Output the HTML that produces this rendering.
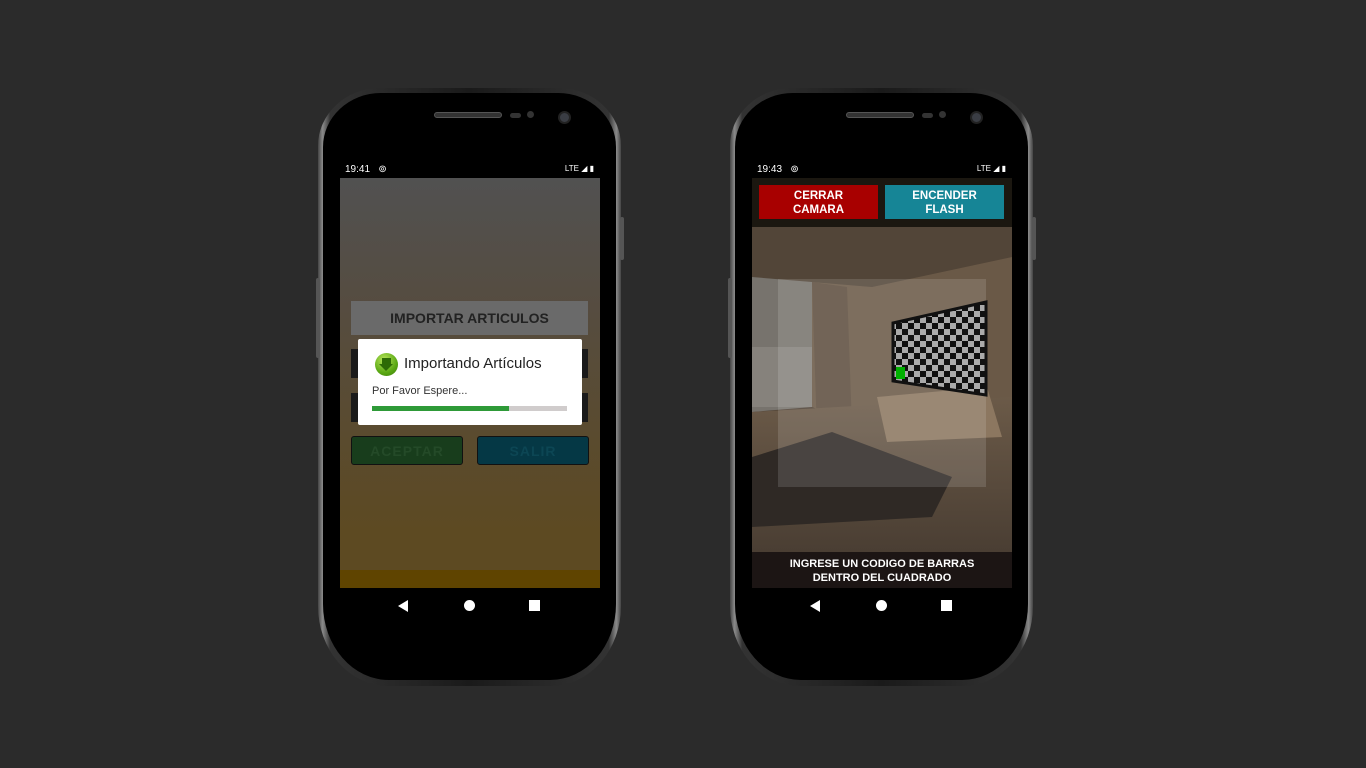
<!DOCTYPE html>
<html><head><meta charset="utf-8"><style>
*{margin:0;padding:0;box-sizing:border-box}
body{width:1366px;height:768px;background:#2b2b2b;position:relative;overflow:hidden;font-family:"Liberation Sans",sans-serif}
.phone{position:absolute;top:88px;width:303px;height:598px;border-radius:62px 62px 70px 70px/58px 58px 80px 80px;background:linear-gradient(90deg,#444,#8a8a8a 1.5%,#333 4%,#1a1a1a 50%,#333 96%,#8a8a8a 98.5%,#444)}
.inner{position:absolute;left:5px;top:5px;right:5px;bottom:6px;background:#000;border-radius:58px 58px 66px 66px/54px 54px 76px 76px}
.spk{position:absolute;left:116px;top:24px;width:68px;height:6px;border-radius:3px;background:#333;border:1px solid #555}
.d1{position:absolute;left:192px;top:25px;width:11px;height:5px;border-radius:3px;background:#333}
.d2{position:absolute;left:209px;top:23px;width:7px;height:7px;border-radius:50%;background:#333}
.cam{position:absolute;left:240px;top:23px;width:13px;height:13px;border-radius:50%;background:#3a3d44;border:2px solid #222}
.btn{position:absolute;width:4px;background:#555;border-radius:2px}
.screen{position:absolute;left:22px;top:72px;width:260px;height:462px;background:#000;overflow:hidden}
.sb{position:absolute;left:0;top:0;width:260px;height:18px;color:#fff;font-size:10px}
.sb .t{position:absolute;left:5px;top:4px}
.sb .r{position:absolute;right:6px;top:4px;font-size:8px}
.nav{position:absolute;top:428px;width:260px;height:34px}
.tri{position:absolute;left:58px;top:12px;width:0;height:0;border-top:6px solid transparent;border-bottom:6px solid transparent;border-right:10px solid #fff}
.cir{position:absolute;left:124px;top:12px;width:11px;height:11px;border-radius:50%;background:#fff}
.sq{position:absolute;left:189px;top:12px;width:11px;height:11px;background:#fff}
.c{position:absolute;text-align:center}
</style></head><body>

<!-- LEFT PHONE -->
<div class="phone" style="left:318px">
<div class="btn" style="left:302px;top:129px;height:43px"></div>
<div class="btn" style="left:-2px;top:190px;height:80px"></div>
<div class="inner"></div>
<div class="spk"></div><div class="d1"></div><div class="d2"></div><div class="cam"></div>
<div class="screen">
 <div class="sb"><span class="t">19:41 &nbsp; ⊚</span><span class="r">LTE ◢ ▮</span></div>
 <div style="position:absolute;top:18px;left:0;width:260px;height:392px;background:linear-gradient(#515151,#564c3f 35%,#5d4a22 90%)"></div>
 <div style="position:absolute;top:410px;left:0;width:260px;height:18px;background:#5f4400"></div>
 <div class="c" style="left:11px;top:141px;width:237px;height:34px;background:#6a6a6a;color:#222;font-weight:bold;font-size:14px;line-height:34px">IMPORTAR ARTICULOS</div>
 <div style="position:absolute;left:11px;top:189px;width:237px;height:29px;background:#1a1a1a"></div>
 <div style="position:absolute;left:11px;top:233px;width:237px;height:29px;background:#1a1a1a"></div>
 <div class="c" style="left:11px;top:276px;width:112px;height:29px;background:#183d1c;border:1px solid #111;border-radius:3px;color:#244a28;font-weight:bold;font-size:14px;line-height:28px;letter-spacing:1px">ACEPTAR</div>
 <div class="c" style="left:137px;top:276px;width:112px;height:29px;background:#053845;border:1px solid #111;border-radius:3px;color:#0c4654;font-weight:bold;font-size:14px;line-height:28px;letter-spacing:1px">SALIR</div>
 <div style="position:absolute;left:18px;top:179px;width:224px;height:86px;background:#fff;border-radius:2px">
  <div style="position:absolute;left:17px;top:14px;width:23px;height:23px;border-radius:50%;background:radial-gradient(circle at 40% 30%,#b8e65a,#5aa814 60%,#3a7a08)"></div>
  <div style="position:absolute;left:24px;top:19px;width:9px;height:6px;background:#2d6a06"></div>
  <div style="position:absolute;left:21px;top:25px;border-left:7.5px solid transparent;border-right:7.5px solid transparent;border-top:7px solid #2d6a06"></div>
  <div style="position:absolute;left:46px;top:16px;font-size:15px;color:#222">Importando Artículos</div>
  <div style="position:absolute;left:14px;top:46px;font-size:11px;color:#333">Por Favor Espere...</div>
  <div style="position:absolute;left:14px;top:67px;width:195px;height:5px;background:#d0cccc"></div>
  <div style="position:absolute;left:14px;top:67px;width:137px;height:5px;background:#2e9a38"></div>
 </div>
 <div class="nav"><div class="tri"></div><div class="cir"></div><div class="sq"></div></div>
</div>
</div>

<!-- RIGHT PHONE -->
<div class="phone" style="left:730px">
<div class="btn" style="left:302px;top:129px;height:43px"></div>
<div class="btn" style="left:-2px;top:190px;height:80px"></div>
<div class="inner"></div>
<div class="spk"></div><div class="d1"></div><div class="d2"></div><div class="cam"></div>
<div class="screen">
 <div class="sb"><span class="t">19:43 &nbsp; ⊚</span><span class="r">LTE ◢ ▮</span></div>
 <div style="position:absolute;top:18px;left:0;width:260px;height:49px;background:#1b1710"></div>
 <div class="c" style="left:7px;top:25px;width:119px;height:34px;background:#a80000;color:#fff;font-weight:bold;font-size:11.5px;line-height:14px;padding-top:4px">CERRAR<br>CAMARA</div>
 <div class="c" style="left:133px;top:25px;width:119px;height:34px;background:#168596;color:#fff;font-weight:bold;font-size:11.5px;line-height:14px;padding-top:4px">ENCENDER<br>FLASH</div>
 <svg style="position:absolute;left:0;top:67px" width="260" height="361" viewBox="0 0 260 361">
  <defs><pattern id="ck" width="12" height="12" patternUnits="userSpaceOnUse"><rect width="12" height="12" fill="#aaa"/><rect width="6" height="6" fill="#111"/><rect x="6" y="6" width="6" height="6" fill="#111"/></pattern>
  <linearGradient id="fl" x1="0" y1="0" x2="0" y2="1"><stop offset="0" stop-color="#6b5a48"/><stop offset="1" stop-color="#4a3e33"/></linearGradient></defs>
  <rect width="260" height="361" fill="#4c3f33"/>
  <polygon points="0,0 260,0 260,30 120,60 0,50" fill="#524538"/>
  <polygon points="0,50 60,55 60,180 0,185" fill="#77736d"/>
  <rect x="0" y="120" width="60" height="60" fill="#86827c"/>
  <polygon points="60,55 120,60 260,30 260,200 120,205 60,180" fill="#6a5947"/>
  <polygon points="60,55 95,60 100,200 65,205" fill="#5e4e3e"/>
  <polygon points="0,185 260,170 260,325 0,325" fill="url(#fl)"/>
  <polygon points="0,230 80,205 200,250 180,290 0,300" fill="#2f2925"/>
  <polygon points="125,170 235,160 250,210 135,215" fill="#8c7760"/>
  <rect x="0" y="325" width="260" height="36" fill="#1c1514"/>
  <rect x="26" y="52" width="208" height="208" fill="#ffffff" opacity="0.13"/>
  <polygon points="141,96 234,75 234,168 141,154" fill="url(#ck)" stroke="#111" stroke-width="3"/>
  <rect x="144" y="140" width="9" height="12" fill="#00b000"/>
 </svg>
 <div class="c" style="left:0;top:397px;width:260px;color:#fff;font-weight:bold;font-size:11px;line-height:14px">INGRESE UN CODIGO DE BARRAS<br>DENTRO DEL CUADRADO</div>
 <div class="nav"><div class="tri"></div><div class="cir"></div><div class="sq"></div></div>
</div>
</div>
</body></html>
